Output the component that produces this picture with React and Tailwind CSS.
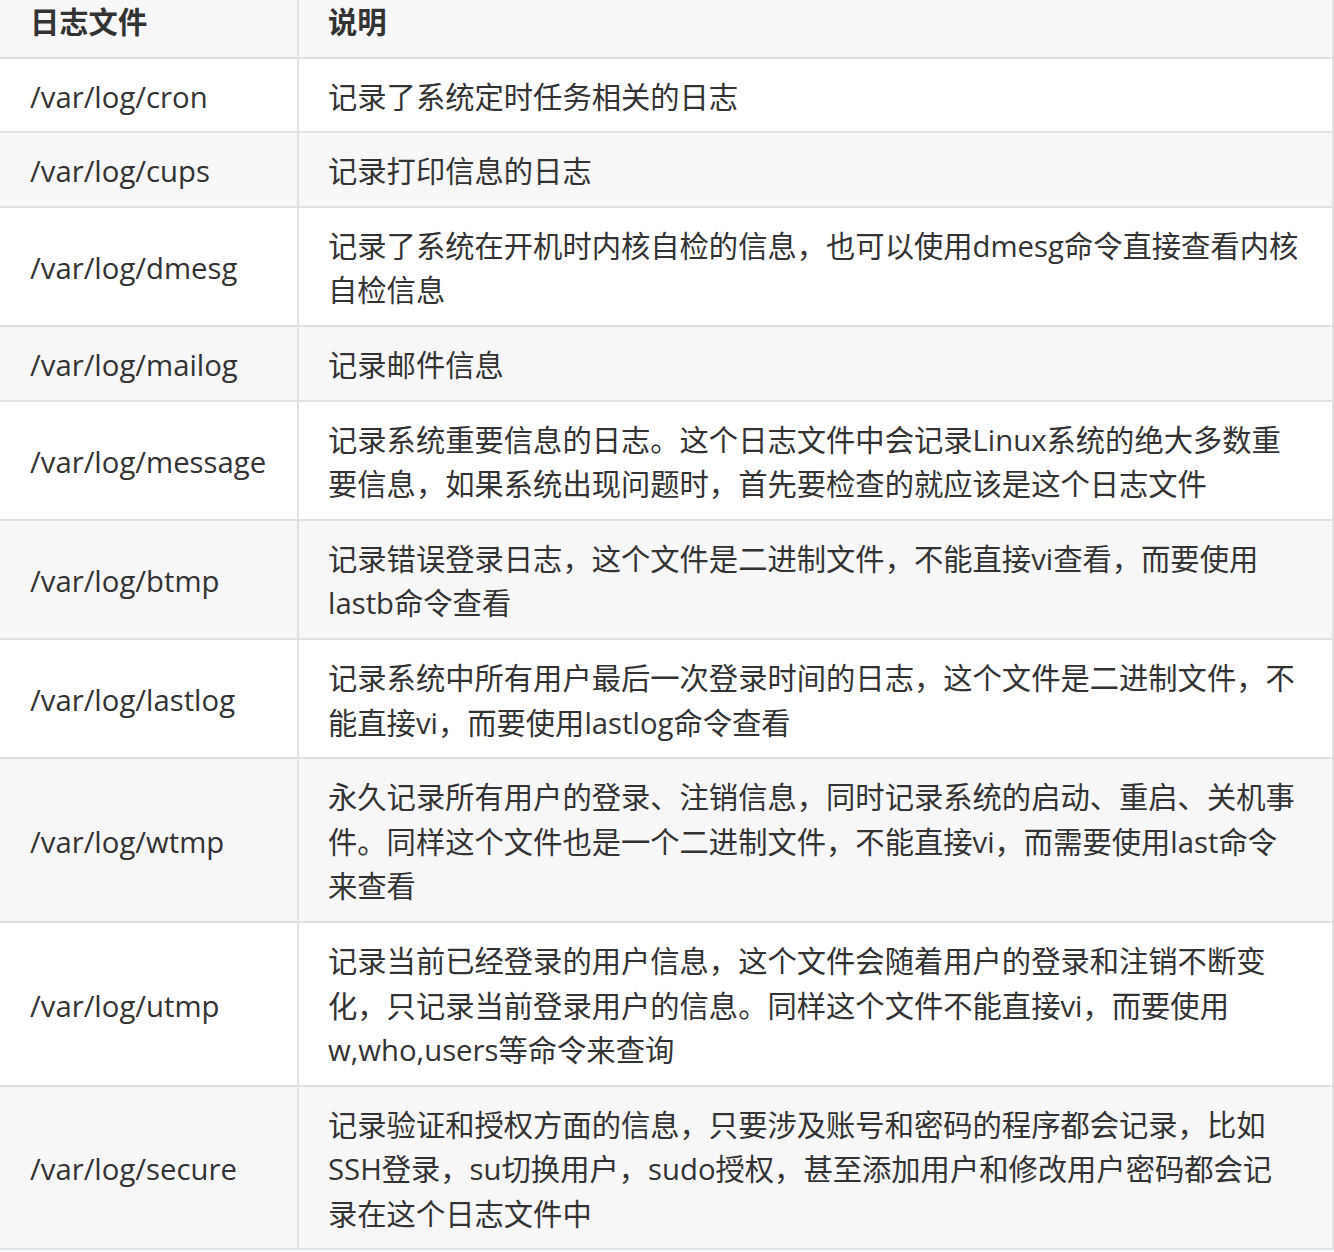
import React from 'react'

const rows = [
  ['/var/log/cron', ['记录了系统定时任务相关的日志']],
  ['/var/log/cups', ['记录打印信息的日志']],
  ['/var/log/dmesg', ['记录了系统在开机时内核自检的信息，也可以使用dmesg命令直接查看内核', '自检信息']],
  ['/var/log/mailog', ['记录邮件信息']],
  ['/var/log/message', ['记录系统重要信息的日志。这个日志文件中会记录Linux系统的绝大多数重', '要信息，如果系统出现问题时，首先要检查的就应该是这个日志文件']],
  ['/var/log/btmp', ['记录错误登录日志，这个文件是二进制文件，不能直接vi查看，而要使用', 'lastb命令查看']],
  ['/var/log/lastlog', ['记录系统中所有用户最后一次登录时间的日志，这个文件是二进制文件，不', '能直接vi，而要使用lastlog命令查看']],
  ['/var/log/wtmp', ['永久记录所有用户的登录、注销信息，同时记录系统的启动、重启、关机事', '件。同样这个文件也是一个二进制文件，不能直接vi，而需要使用last命令', '来查看']],
  ['/var/log/utmp', ['记录当前已经登录的用户信息，这个文件会随着用户的登录和注销不断变', '化，只记录当前登录用户的信息。同样这个文件不能直接vi，而要使用', 'w,who,users等命令来查询']],
  ['/var/log/secure', ['记录验证和授权方面的信息，只要涉及账号和密码的程序都会记录，比如', 'SSH登录，su切换用户，sudo授权，甚至添加用户和修改用户密码都会记', '录在这个日志文件中']],
]

function Row({ left, lines, gray, bold }) {
  return (
    <div className={`flex border-b-2 border-[#dfe2e5] ${gray ? 'bg-[#f7f7f7]' : 'bg-white'}`}>
      <div className={`w-[299px] shrink-0 flex items-center pl-[30px] pt-[4px] border-r-2 border-[#dfe2e5] ${bold ? 'font-bold' : ''}`}>
        {left}
      </div>
      <div className={`flex-1 pl-[29px] pt-[16px] pb-[12px] border-r-2 border-[#dfe2e5] ${bold ? 'font-bold' : ''}`}>
        {lines.map((l, i) => (
          <div key={i} className="whitespace-nowrap">{l}</div>
        ))}
      </div>
    </div>
  )
}

export default function App() {
  return (
    <div className="w-[1334px] h-[1252px] overflow-hidden bg-white">
      <div
        className="w-[1334px] -mt-[16px] text-[29.3px] leading-[44.6px] text-[#333333]"
        style={{ fontFamily: '"Open Sans", "Noto Sans CJK SC", sans-serif' }}
      >
        <Row left="日志文件" lines={['说明']} gray bold />
        {rows.map(([left, lines], i) => (
          <Row key={left} left={left} lines={lines} gray={i % 2 === 1} />
        ))}
      </div>
    </div>
  )
}
